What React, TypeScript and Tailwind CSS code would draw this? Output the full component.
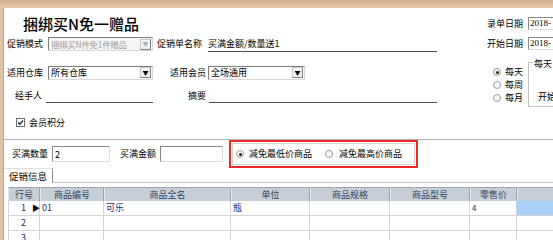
import React from "react";

const font = "font-['Noto_Sans_CJK_SC',sans-serif]";

function Select({ w, text, disabled }: { w: string; text: string; disabled?: boolean }) {
  return (
    <div
      className={`flex h-[14px] ${w} items-center border border-[#7c7c7c] border-b-[#d8d8d8] border-r-[#d8d8d8] ${
        disabled ? "bg-[#f4f4f4] text-[#a0a0a0]" : "bg-white text-black"
      }`}
    >
      <span className={`flex-1 whitespace-nowrap pl-[2px] leading-[12px] ${disabled ? "text-[8.4px] tracking-[-0.2px]" : ""}`}>
        {text}
      </span>
      <div
        className={`mr-[1px] flex h-[11px] w-[11px] shrink-0 items-center justify-center border border-[#c8c8c8] border-b-[#808080] border-r-[#808080] bg-[#f0f0f0] text-[6px] leading-none ${
          disabled ? "text-[#b0b0b0]" : "text-black"
        }`}
      >
        ▼
      </div>
    </div>
  );
}

function Radio({ on }: { on?: boolean }) {
  return (
    <div className="flex h-[8px] w-[8px] shrink-0 items-center justify-center rounded-full border border-[#9a9a9a] bg-[#f8f8f8]">
      {on && <div className="h-[3px] w-[3px] rounded-full bg-[#202020]" />}
    </div>
  );
}

function Input({ w, text }: { w: string; text?: string }) {
  return (
    <div className={`flex h-[16px] ${w} items-center border border-[#8a8a8a] border-b-[#dcdcdc] border-r-[#dcdcdc] bg-white pl-[2px] leading-none`}>
      {text}
    </div>
  );
}

const cols = [
  { name: "行号", w: "w-[32px]" },
  { name: "商品编号", w: "w-[64px]" },
  { name: "商品全名", w: "w-[127px]" },
  { name: "单位", w: "w-[79px]" },
  { name: "商品规格", w: "w-[80px]" },
  { name: "商品型号", w: "w-[80px]" },
  { name: "零售价", w: "w-[47px]" },
  { name: "", w: "w-[40px]" },
];

const rows = [
  ["01", "可乐", "瓶", "", "", "4"],
  ["", "", "", "", "", ""],
  ["", "", "", "", "", ""],
];

export default function App() {
  return (
    <div className={`flex h-[240px] w-[553px] flex-col overflow-hidden bg-white text-[9px] text-black ${font}`}>
      <div className="h-[8px] shrink-0 bg-gradient-to-b from-[#d2ae8a] to-[#e4c6a6]" />
      <div className="flex flex-1">
        <div className="w-[3px] shrink-0 bg-[#e0c2a2]" />
        <div className="flex flex-1 flex-col border-l border-[#a8a8a8]">
          {/* upper form */}
          <div className="flex h-[132px] shrink-0 border-b border-[#b4b4b4]">
            <div className="flex w-[436px] shrink-0 flex-col">
              <div className="flex h-[28px] items-center pl-[19px] pt-[2px] text-[15px] font-medium leading-none">
                捆绑买N免一赠品
              </div>
              <div className="flex h-[16px] items-center">
                <span className="ml-[3px] w-[41px] leading-[12px]">促销模式</span>
                <Select w="w-[105px]" text="捆绑买N件免1件赠品" disabled />
                <span className="ml-[4px] w-[51px] leading-[12px]">促销单名称</span>
                <div className="flex h-full w-[229px] items-center border-b border-[#505050] leading-[12px]">
                  买满金额/数量送1
                </div>
              </div>
              <div className="mt-[13px] flex h-[15px] items-center">
                <span className="ml-[3px] w-[41px] leading-[12px]">适用仓库</span>
                <Select w="w-[105px]" text="所有仓库" />
                <span className="ml-[17px] w-[38px] leading-[12px]">适用会员</span>
                <Select w="w-[97px]" text="全场通用" />
              </div>
              <div className="mt-[9px] flex h-[14px] items-center">
                <span className="ml-[11px] w-[31px] leading-[12px]">经手人</span>
                <div className="h-full w-[107px] border-b border-[#505050]" />
                <span className="ml-[35px] w-[21px] leading-[12px]">摘要</span>
                <div className="h-full w-[228px] border-b border-[#505050]" />
              </div>
              <div className="mt-[13px] flex h-[13px] items-center">
                <div className="ml-[12px] flex h-[9px] w-[9px] items-center justify-center border border-[#6c6c6c] bg-white">
                  <svg width="7" height="7" viewBox="0 0 7 7">
                    <path d="M1 3.5 L2.8 5.3 L6 1.5" stroke="#202020" strokeWidth="1.3" fill="none" />
                  </svg>
                </div>
                <span className="ml-[4px] leading-[12px]">会员积分</span>
              </div>
            </div>
            <div className="flex flex-1 flex-col">
              <div className="mt-[9px] flex h-[13px] items-center">
                <span className="ml-[47px] w-[41px] leading-[12px]">录单日期</span>
                <div className="flex h-full w-[40px] items-center border border-[#8a8a8a] border-b-[#dcdcdc] pl-[1px] font-['Liberation_Serif',serif] leading-none">
                  2018-
                </div>
              </div>
              <div className="mt-[7px] flex h-[13px] items-center">
                <span className="ml-[47px] w-[41px] leading-[12px]">开始日期</span>
                <div className="flex h-full w-[40px] items-center border border-[#8a8a8a] border-b-[#dcdcdc] pl-[1px] font-['Liberation_Serif',serif] leading-none">
                  2018-
                </div>
              </div>
              <div className="mt-[12px] flex">
                <div className="ml-[53px] flex w-[35px] shrink-0 flex-col gap-[3px] pt-[5px]">
                  {["每天", "每周", "每月"].map((t, i) => (
                    <div key={t} className="flex h-[10px] items-center gap-[4px]">
                      <Radio on={i === 0} />
                      <span className="leading-[10px]">{t}</span>
                    </div>
                  ))}
                </div>
                <div className="relative flex h-[45px] w-[40px] shrink-0 flex-col border border-[#c0c0c0] pl-[9px]">
                  <span className="absolute -top-[4px] left-[4px] bg-white px-[1px] leading-[10px]">每天</span>
                  <span className="mt-[29px] leading-[10px]">开始</span>
                </div>
              </div>
            </div>
          </div>

          {/* condition row */}
          <div className="flex h-[28px] shrink-0 items-center">
            <span className="ml-[8px] w-[40px] leading-[12px]">买满数量</span>
            <Input w="w-[58px]" text="2" />
            <span className="ml-[10px] w-[40px] leading-[12px]">买满金额</span>
            <Input w="w-[63px]" />
            <div className="ml-[6px] flex h-[28px] w-[189px] border-2 border-[#ec2a2a]">
              <div className="m-[1px] flex flex-1 items-center border border-[#d4d4d4] pl-[3px]">
                <Radio on />
                <span className="ml-[5px] leading-[12px]">减免最低价商品</span>
                <div className="ml-[13px]">
                  <Radio />
                </div>
                <span className="ml-[6px] leading-[12px]">减免最高价商品</span>
              </div>
            </div>
          </div>

          {/* tabs */}
          <div className="flex h-[15px] shrink-0">
            <div className="flex w-[49px] items-center justify-center border-r border-t border-[#8c8c8c] border-t-[#e0e0e0] bg-white text-[9.5px] leading-[12px]">
              促销信息
            </div>
            <div className="flex-1 border-b border-[#c8c8c8]" />
          </div>

          {/* grid */}
          <div className="overflow-hidden pl-[4px] pt-[4px]">
            <div className="flex h-[14px] w-[560px] bg-[#c6ced8] text-[#33465a]">
              {cols.map((c, i) => (
                <div
                  key={i}
                  className={`flex ${c.w} shrink-0 items-center justify-center border-r border-t border-l border-[#9aa4b0] border-l-[#e6eaee] leading-[12px]`}
                >
                  {c.name}
                </div>
              ))}
            </div>
            {rows.map((r, ri) => (
              <div key={ri} className="flex h-[15px] w-[560px] text-[#1c2c78]">
                <div className="flex w-[32px] shrink-0 items-center justify-end border-b border-r border-l border-[#d4d4d4] bg-white leading-[12px]">
                  <span>{ri + 1}</span>
                  <span className="ml-[6px] w-[7px] text-[8px] text-black">{ri === 0 ? "▶" : ""}</span>
                </div>
                {r.map((v, ci) => (
                  <div
                    key={ci}
                    className={`flex ${cols[ci + 1].w} shrink-0 items-center border-b border-r border-[#d4d4d4] pl-[2px] leading-[12px] ${
                      ci === 5 ? "text-[8px]" : ""
                    }`}
                  >
                    {v}
                  </div>
                ))}
                <div
                  className={`w-[40px] shrink-0 border-b border-r border-[#d4d4d4] ${ri === 0 ? "bg-[#a8d0f8]" : ""}`}
                />
              </div>
            ))}
          </div>
        </div>
      </div>
    </div>
  );
}
